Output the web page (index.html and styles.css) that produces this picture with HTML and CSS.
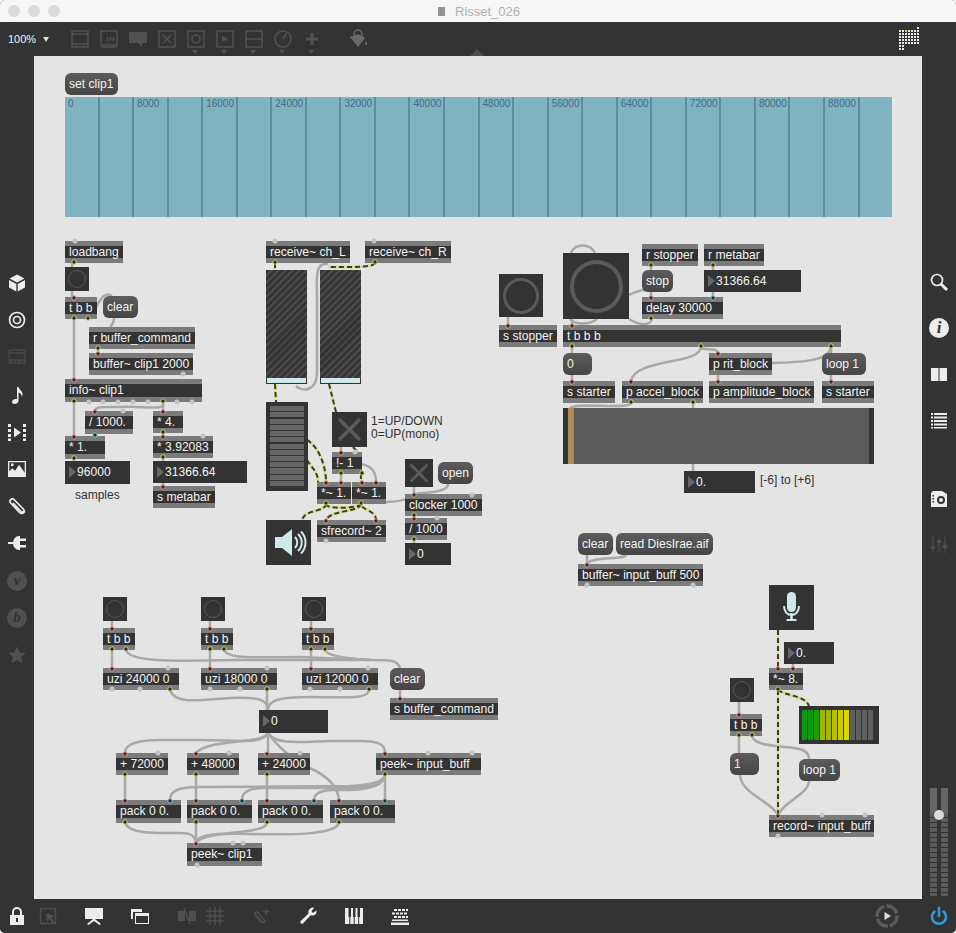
FILE: index.html
```html
<!DOCTYPE html>
<html lang="en">
<head>
<meta charset="utf-8">
<title>Risset_026</title>
<link rel="stylesheet" href="styles.css">
</head>
<body>
<div class="window">
  <header class="titlebar">
    <div class="lights"><i></i><i></i><i></i></div>
    <div class="title"><b class="docicon"></b><span>Risset_026</span></div>
  </header>

  <div class="toolbar">
    <div class="zoomctl">100%<i class="caret"></i></div>
    <svg class="ti" viewBox="0 0 20 20"><path d="M2 2h16v16H2zM2 5h16M2 15h16"/></svg>
    <svg class="ti" viewBox="0 0 20 20"><path d="M2 2h16v14H2zM2 18h16M8 12l1-4M11 12l1-4M14 12l1-4"/></svg>
    <svg class="ti fill" viewBox="0 0 20 20"><path d="M1 3h18v11h-5v4l-4-4H1z"/></svg>
    <svg class="ti" viewBox="0 0 20 20"><path d="M2 2h16v16H2zM6 6l8 8M14 6l-8 8"/></svg>
    <span class="tm"><svg class="ti" viewBox="0 0 20 20"><path d="M2 2h16v16H2z"/><circle cx="10" cy="10" r="4"/></svg></span>
    <span class="tm"><svg class="ti" viewBox="0 0 20 20"><path d="M2 2h16v16H2z"/><path class="solid" d="M7 7l6 3-6 3z"/></svg></span>
    <span class="tm"><svg class="ti" viewBox="0 0 20 20"><path d="M2 2h16v16H2zM2 10h16"/></svg></span>
    <span class="tm"><svg class="ti" viewBox="0 0 20 20"><circle cx="10" cy="10" r="8" /><path d="M10 10l3-5"/></svg></span>
    <span class="tm"><svg class="ti thick" viewBox="0 0 20 20"><path d="M10 4v12M4 10h12"/></svg></span>
    <svg class="ti bucket" viewBox="0 0 20 20"><path d="M6 8V5a4 4 0 0 1 8 0v3"/><path class="solid" d="M2 8l8-3 7 4-7 9z"/><path class="solid" d="M18 12c1 2 1.500 3 .8 3.800-.8.700-2 .2-2-.8s.5-2 1.200-3z"/></svg>
    <div class="notch"></div>
    <svg class="gridicon" viewBox="0 0 21 24">
      <defs><pattern id="dots" width="3" height="3" patternUnits="userSpaceOnUse"><rect width="2" height="2" fill="#e8e8e8"/></pattern></defs>
      <rect x="0" y="3" width="21" height="15" fill="url(#dots)"/>
      <rect x="18" y="0" width="3" height="3" fill="url(#dots)"/>
      <rect x="0" y="18" width="6" height="6" fill="url(#dots)"/>
      <rect x="6" y="3" width="2" height="2" fill="#d8d83a"/>
    </svg>
  </div>

  <div class="middle">
    <nav class="rail left">
      <svg class="ri" viewBox="0 0 20 20"><path class="solid" d="M10 1.500l7.500 4-7.500 4-7.500-4zM2 7l7.300 4v7.500L2 14.500zM18 7l-7.300 4v7.500l7.300-4z"/></svg>
      <svg class="ri line2" viewBox="0 0 20 20"><circle cx="10" cy="10" r="7.500"/><circle cx="10" cy="10" r="3.500"/></svg>
      <svg class="ri dim" viewBox="0 0 20 20"><path d="M2 3h16v13H2zM2 6h16M2 13h16M4 16v-3M8 16v-3M12 16v-3"/></svg>
      <svg class="ri" viewBox="0 0 20 20"><path class="solid" d="M10 2h1.500c.5 3 4 3.500 4 7 0 1-.3 2-.8 3 .2-2.500-1.500-4-3.200-4.500V15.500c0 2-2 3.500-4 3.500-1.500 0-2.500-.8-2.500-2 0-1.800 2-3 3.600-3 .5 0 1 0 1.400.3z"/></svg>
      <svg class="ri" viewBox="0 0 20 20"><path class="solid" d="M1 2h3v3H1zM1 7h3v3H1zM1 12h3v3H1zM1 16.500h3v2.500H1zM16 2h3v3h-3zM16 7h3v3h-3zM16 12h3v3h-3zM16 16.500h3v2.500h-3zM7 5.500l7 5-7 5z"/></svg>
      <svg class="ri" viewBox="0 0 20 20"><path class="solid" fill-rule="evenodd" d="M1 2h18v16H1zM2.300 3.300v9l3-3 2.700 2.500 4-6 5.700 8V3.300zM4 4.500h2.500V7H4z"/></svg>
      <svg class="ri line2" viewBox="0 0 20 20"><path d="M6 7l8 8.500c1.500 1.800 4-.5 2.500-2.300L7 3.500C5 1.500 1.500 4.500 3.500 6.800l9 9.700c2 2 5.300.5 5-2"/></svg>
      <svg class="ri" viewBox="0 0 20 20"><path class="solid" d="M6 10a6 7 0 0 1 6-7h1v14h-1a6 7 0 0 1-6-7zM13 5.500h6V8h-6zM13 12h6v2.500h-6zM1 9h6v2H1z"/></svg>
      <div class="badge">v</div>
      <div class="badge">b</div>
      <svg class="ri dim" viewBox="0 0 20 20"><path class="solid" d="M10 1.500l2.500 5.800 6.300.6-4.800 4.100 1.500 6.200-5.500-3.300-5.500 3.300 1.500-6.200L1.200 7.900l6.300-.6z"/></svg>
    </nav>

    <main class="canvas">
      <svg class="wires" viewBox="34 56 888 843">
        <defs>
          <g id="sigs">
            <path d="M275 263V270"/>
            <path d="M375 263C374 268 345 267 328 267"/>
            <path d="M275 384L276 402"/>
            <path d="M329 384L336 412"/>
            <path d="M307 440C318 446 326 465 326 482"/>
            <path d="M307 460C312 468 318 472 318 482"/>
            <path d="M353 447L361 456"/>
            <path d="M361 474V482"/>
            <path d="M326 504C326 512 305 509 302 520"/>
            <path d="M326 504C326 510 361 508 361 504C361 510 376 510 376 520"/>
            <path d="M361 504C360 512 330 510 326 520"/>
            <path d="M778 630V668"/>
            <path d="M778 690C785 696 805 695 809 706"/>
            <path d="M778 690V815"/>
          </g>
        </defs>
        <g class="wire">
          <path d="M72 263V267M72 291V297M74 319V379"/>
          <path d="M88 319C96 315 100 288 112 296"/>
          <path d="M114 318C114 322 112 325 110 327"/>
          <path d="M98 349V353"/>
          <path d="M163 402V405C163 410 140 406 120 407C105 407 95 406 95 411"/>
          <path d="M163 402V411M95 434V436M163 433V436M74 402V436M74 459V461M163 458V461M163 483V486"/>
          <path d="M328 264C314 262 317 280 317 300V372C317 392 302 392 296 386"/>
          <path d="M341 447V452M341 474V482"/>
          <path d="M361 464C372 466 376 472 376 482"/>
          <path d="M386 502C395 502 405 500 411 497"/>
          <path d="M414 487V494M414 516V518M414 540V543"/>
          <path d="M448 484C448 492 430 492 415 494"/>
          <path d="M508 317V325"/>
          <path d="M571 253C575 243 590 243 595 253"/>
          <path d="M570 319C575 325 590 325 597 319"/>
          <path d="M629 295C635 292 640 290 645 290"/>
          <path d="M629 319C640 326 650 326 652 319"/>
          <path d="M651 266V297M713 266V270M713 292V297M572 319V325M572 347V381"/>
          <path d="M701 347C700 365 635 358 631 381"/>
          <path d="M701 347C701 351 718 347 718 353M718 375V381"/>
          <path d="M772 363C800 362 828 362 831 347"/>
          <path d="M831 347V381"/>
          <path d="M631 403C630 410 575 402 570 408"/>
          <path d="M693 403V471"/>
          <path d="M112 621V668M210 621V668M311 621V668"/>
          <path d="M126 650C130 665 200 660 240 660L370 660C390 660 398 660 400 668"/>
          <path d="M224 650C228 660 260 657 300 657L370 660"/>
          <path d="M325 649C325 656 345 658 370 660"/>
          <path d="M400 690V698"/>
          <path d="M170 690C175 705 200 700 230 698C260 697 268 700 268 710"/>
          <path d="M267 690V710"/>
          <path d="M369 690C368 700 345 697 310 697C280 697 268 700 268 710"/>
          <path d="M268 733C262 745 240 740 200 740L160 740C135 740 125 745 125 753"/>
          <path d="M268 733C262 745 210 738 196 753"/>
          <path d="M268 733V753"/>
          <path d="M268 733C275 745 300 742 330 741L360 741C380 741 385 745 385 753"/>
          <path d="M268 733C280 750 300 765 310 768C325 775 338 785 339 800"/>
          <path d="M125 775V800M196 775V800M267 775V800M385 775V800"/>
          <path d="M385 775C384 782 372 785 350 786L200 787C180 787 170 790 170 800"/>
          <path d="M385 775C384 783 372 787 350 788L265 788C250 788 242 792 242 800"/>
          <path d="M385 775C384 785 372 789 350 790L335 790C322 790 314 793 314 800"/>
          <path d="M125 823C130 835 160 833 180 833C190 833 195 835 196 843"/>
          <path d="M196 823V843"/>
          <path d="M267 823C265 835 205 830 196 843"/>
          <path d="M339 823C335 835 290 835 250 834C210 833 197 835 196 843"/>
          <path d="M587 555V564"/>
          <path d="M626 555C625 560 590 556 587 564"/>
          <path d="M793 664V668M739 702V714M739 736V753"/>
          <path d="M752 736C755 745 770 745 785 747C800 748 809 750 809 759"/>
          <path d="M740 775C742 795 770 800 778 815"/>
          <path d="M809 781C808 795 785 800 778 815"/>
        </g>
        <use href="#sigs" class="sig-a"/>
        <use href="#sigs" class="sig-b"/>
      </svg>

      <div class="msg n-setclip">set clip1</div>
      <div class="wave">
        <div class="cell">0</div><div class="cell"></div>
        <div class="cell">8000</div><div class="cell"></div>
        <div class="cell">16000</div><div class="cell"></div>
        <div class="cell">24000</div><div class="cell"></div>
        <div class="cell">32000</div><div class="cell"></div>
        <div class="cell">40000</div><div class="cell"></div>
        <div class="cell">48000</div><div class="cell"></div>
        <div class="cell">56000</div><div class="cell"></div>
        <div class="cell">64000</div><div class="cell"></div>
        <div class="cell">72000</div><div class="cell"></div>
        <div class="cell">80000</div><div class="cell"></div>
        <div class="cell">88000</div><div class="cell"></div>
      </div>

      <div class="obj n-loadbang">loadbang</div>
      <div class="btn n-btn1"></div>
      <div class="obj n-tbb1">t b b</div>
      <div class="msg n-clear1">clear</div>
      <div class="obj n-rbuf">r buffer_command</div>
      <div class="obj n-bufclip">buffer~ clip1 2000</div>
      <div class="obj tall n-info">info~ clip1</div>
      <div class="obj tall n-div1">/ 1000.</div>
      <div class="obj n-mul4">* 4.</div>
      <div class="obj tall n-mul1">* 1.</div>
      <div class="obj n-mul39">* 3.92083</div>
      <div class="num tall n-num96">96000</div>
      <div class="num n-num31a">31366.64</div>
      <div class="note n-samples">samples</div>
      <div class="obj n-smeta">s metabar</div>

      <div class="obj n-recvl">receive~ ch_L</div>
      <div class="obj n-recvr">receive~ ch_R</div>
      <div class="gain n-gainl"><div class="hatch"></div><div class="gainfoot"></div></div>
      <div class="gain n-gainr"><div class="hatch"></div><div class="gainfoot"></div></div>
      <div class="meter n-meter"><div class="rows"></div></div>
      <div class="tog n-tog1"><svg viewBox="0 0 20 20"><path d="M4 4l12 12M16 4L4 16"/></svg></div>
      <div class="note n-updown">1=UP/DOWN<br>0=UP(mono)</div>
      <div class="obj n-minus">!- 1</div>
      <div class="obj n-muls1">*~ 1.</div>
      <div class="obj n-muls2">*~ 1.</div>
      <div class="tile n-ezdac">
        <svg viewBox="0 0 45 45"><path class="light" d="M9 17h7l10-8v27l-10-8H9z"/><path class="lightline" d="M29 17c3 3 3 8 0 11M32 14c5 5 5 12 0 17M35 11.500c6 6 6 16 0 22"/></svg>
      </div>
      <div class="obj n-sfrec">sfrecord~ 2</div>
      <div class="tog n-tog2"><svg viewBox="0 0 20 20"><path d="M4 4l12 12M16 4L4 16"/></svg></div>
      <div class="msg n-open">open</div>
      <div class="obj n-clocker">clocker 1000</div>
      <div class="obj n-div2">/ 1000</div>
      <div class="num n-num0a">0</div>

      <div class="btn mid n-btnstop"></div>
      <div class="obj n-sstop">s stopper</div>
      <div class="btn big n-bigbtn"></div>
      <div class="obj n-rstop">r stopper</div>
      <div class="obj n-rmeta">r metabar</div>
      <div class="msg n-stop">stop</div>
      <div class="num n-num31b">31366.64</div>
      <div class="obj n-delay">delay 30000</div>
      <div class="obj n-tbbb">t b b b</div>
      <div class="msg n-msg0">0</div>
      <div class="obj n-prit">p rit_block</div>
      <div class="msg n-loop1">loop 1</div>
      <div class="obj n-sstart1">s starter</div>
      <div class="obj n-paccel">p accel_block</div>
      <div class="obj n-pamp">p amplitude_block</div>
      <div class="obj n-sstart2">s starter</div>
      <div class="slider"><i class="knob"></i></div>
      <div class="num n-num0b">0.</div>
      <div class="note n-range">[-6] to [+6]</div>

      <div class="btn n-b1"></div><div class="btn n-b2"></div><div class="btn n-b3"></div>
      <div class="obj n-t1">t b b</div><div class="obj n-t2">t b b</div><div class="obj n-t3">t b b</div>
      <div class="obj n-uzi1">uzi 24000 0</div>
      <div class="obj n-uzi2">uzi 18000 0</div>
      <div class="obj n-uzi3">uzi 12000 0</div>
      <div class="msg n-clear2">clear</div>
      <div class="obj n-sbuf">s buffer_command</div>
      <div class="num tall n-num0c">0</div>
      <div class="obj n-p72">+ 72000</div>
      <div class="obj n-p48">+ 48000</div>
      <div class="obj n-p24">+ 24000</div>
      <div class="obj n-peekin">peek~ input_buff</div>
      <div class="obj tall n-pack1">pack 0 0.</div>
      <div class="obj tall n-pack2">pack 0 0.</div>
      <div class="obj tall n-pack3">pack 0 0.</div>
      <div class="obj tall n-pack4">pack 0 0.</div>
      <div class="obj tall n-peekclip">peek~ clip1</div>

      <div class="msg n-clear3">clear</div>
      <div class="msg n-read">read DiesIrae.aif</div>
      <div class="obj n-bufin">buffer~ input_buff 500</div>
      <div class="tile n-mic">
        <svg viewBox="0 0 45 45"><rect class="light" x="18" y="7" width="9" height="20" rx="4.500"/><path class="lightline" d="M15 21c0 12 15 12 15 0"/><path class="light" d="M21.200 28h2.600v6h3.700v2h-10v-2h3.700z"/></svg>
      </div>
      <div class="num n-num0d">0.</div>
      <div class="obj n-mul8">*~ 8.</div>
      <div class="btn n-b5"></div>
      <div class="obj n-t5">t b b</div>
      <div class="levels"><i></i><i></i><i></i><i></i><i></i><i></i><i></i><i></i><i></i><i></i><i></i><i></i></div>
      <div class="msg n-msg1">1</div>
      <div class="msg n-loop2">loop 1</div>
      <div class="obj n-record">record~ input_buff</div>

      <svg class="ports" viewBox="34 56 888 843">
        <g class="idle">
          <circle cx="75" cy="241" r="2.500"/><circle cx="183" cy="374" r="2.500"/><circle cx="89" cy="402" r="2.500"/><circle cx="103" cy="402" r="2.500"/><circle cx="118" cy="402" r="2.500"/><circle cx="133" cy="402" r="2.500"/><circle cx="148" cy="402" r="2.500"/><circle cx="177" cy="402" r="2.500"/><circle cx="192" cy="402" r="2.500"/><circle cx="123" cy="411" r="2.500"/><circle cx="203" cy="436" r="2.500"/>
          <circle cx="275" cy="241" r="2.500"/><circle cx="374" cy="241" r="2.500"/><circle cx="355" cy="452" r="2.500"/><circle cx="326" cy="541" r="2.500"/><circle cx="472" cy="495" r="2.500"/><circle cx="437" cy="518" r="2.500"/>
          <circle cx="168" cy="668" r="2.500"/><circle cx="267" cy="668" r="2.500"/><circle cx="368" cy="668" r="2.500"/><circle cx="112" cy="689" r="2.500"/><circle cx="140" cy="689" r="2.500"/><circle cx="210" cy="689" r="2.500"/><circle cx="240" cy="689" r="2.500"/><circle cx="310" cy="689" r="2.500"/><circle cx="340" cy="689" r="2.500"/>
          <circle cx="158" cy="753" r="2.500"/><circle cx="229" cy="753" r="2.500"/><circle cx="300" cy="753" r="2.500"/><circle cx="428" cy="753" r="2.500"/><circle cx="472" cy="753" r="2.500"/><circle cx="197" cy="865" r="2.500"/><circle cx="233" cy="843" r="2.500"/><circle cx="243" cy="843" r="2.500"/>
          <circle cx="587" cy="585" r="2.500"/><circle cx="693" cy="585" r="2.500"/><circle cx="822" cy="815" r="2.500"/><circle cx="865" cy="815" r="2.500"/><circle cx="778" cy="836" r="2.500"/>
        </g>
        <g class="in">
          <circle cx="74" cy="298" r="2.200"/><circle cx="98" cy="354" r="2.200"/><circle cx="74" cy="380" r="2.200"/><circle cx="95" cy="412" r="2.200"/><circle cx="74" cy="437" r="2.200"/><circle cx="163" cy="412" r="2.200"/><circle cx="163" cy="437" r="2.200"/><circle cx="163" cy="487" r="2.200"/>
          <circle cx="326" cy="483" r="2.200"/><circle cx="341" cy="483" r="2.200"/><circle cx="362" cy="483" r="2.200"/><circle cx="376" cy="483" r="2.200"/><circle cx="341" cy="453" r="2.200"/><circle cx="414" cy="495" r="2.200"/><circle cx="414" cy="519" r="2.200"/><circle cx="326" cy="521" r="2.200"/><circle cx="376" cy="521" r="2.200"/>
          <circle cx="508" cy="326" r="2.200"/><circle cx="572" cy="326" r="2.200"/><circle cx="651" cy="298" r="2.200"/><circle cx="718" cy="354" r="2.200"/><circle cx="572" cy="382" r="2.200"/><circle cx="631" cy="382" r="2.200"/><circle cx="718" cy="382" r="2.200"/><circle cx="831" cy="382" r="2.200"/>
          <circle cx="112" cy="629" r="2.200"/><circle cx="210" cy="629" r="2.200"/><circle cx="311" cy="629" r="2.200"/><circle cx="112" cy="669" r="2.200"/><circle cx="210" cy="669" r="2.200"/><circle cx="311" cy="669" r="2.200"/><circle cx="400" cy="699" r="2.200"/><circle cx="125" cy="754" r="2.200"/><circle cx="196" cy="754" r="2.200"/><circle cx="267" cy="754" r="2.200"/><circle cx="385" cy="754" r="2.200"/><circle cx="125" cy="801" r="2.200"/><circle cx="196" cy="801" r="2.200"/><circle cx="267" cy="801" r="2.200"/><circle cx="339" cy="801" r="2.200"/><circle cx="196" cy="844" r="2.200"/>
          <circle cx="587" cy="565" r="2.200"/><circle cx="778" cy="669" r="2.200"/><circle cx="793" cy="669" r="2.200"/><circle cx="739" cy="715" r="2.200"/><circle cx="778" cy="816" r="2.200"/>
        </g>
        <g class="cold">
          <circle cx="95" cy="435" r="2.200"/><circle cx="713" cy="298" r="2.200"/><circle cx="170" cy="801" r="2.200"/><circle cx="242" cy="801" r="2.200"/><circle cx="314" cy="801" r="2.200"/><circle cx="385" cy="801" r="2.200"/>
        </g>
        <g class="out">
          <circle cx="74" cy="262" r="2.200"/><circle cx="74" cy="318" r="2.200"/><circle cx="88" cy="318" r="2.200"/><circle cx="98" cy="348" r="2.200"/><circle cx="74" cy="401" r="2.200"/><circle cx="163" cy="401" r="2.200"/><circle cx="163" cy="432" r="2.200"/><circle cx="163" cy="457" r="2.200"/><circle cx="74" cy="458" r="2.200"/>
          <circle cx="275" cy="262" r="2.200"/><circle cx="375" cy="262" r="2.200"/><circle cx="341" cy="473" r="2.200"/><circle cx="362" cy="473" r="2.200"/><circle cx="326" cy="503" r="2.200"/><circle cx="361" cy="503" r="2.200"/><circle cx="414" cy="515" r="2.200"/><circle cx="414" cy="539" r="2.200"/>
          <circle cx="651" cy="265" r="2.200"/><circle cx="713" cy="265" r="2.200"/><circle cx="651" cy="318" r="2.200"/><circle cx="572" cy="346" r="2.200"/><circle cx="701" cy="346" r="2.200"/><circle cx="831" cy="346" r="2.200"/><circle cx="631" cy="402" r="2.200"/><circle cx="693" cy="402" r="2.200"/>
          <circle cx="112" cy="649" r="2.200"/><circle cx="126" cy="649" r="2.200"/><circle cx="210" cy="649" r="2.200"/><circle cx="224" cy="649" r="2.200"/><circle cx="311" cy="649" r="2.200"/><circle cx="325" cy="649" r="2.200"/><circle cx="170" cy="689" r="2.200"/><circle cx="267" cy="689" r="2.200"/><circle cx="369" cy="689" r="2.200"/><circle cx="125" cy="774" r="2.200"/><circle cx="196" cy="774" r="2.200"/><circle cx="267" cy="774" r="2.200"/><circle cx="385" cy="774" r="2.200"/><circle cx="125" cy="822" r="2.200"/><circle cx="196" cy="822" r="2.200"/><circle cx="267" cy="822" r="2.200"/><circle cx="339" cy="822" r="2.200"/>
          <circle cx="778" cy="689" r="2.200"/><circle cx="739" cy="735" r="2.200"/><circle cx="752" cy="735" r="2.200"/>
        </g>
      </svg>
    </main>

    <aside class="rail right">
      <svg class="ri line2" viewBox="0 0 20 20"><circle cx="8" cy="8" r="5.500"/><path class="thickline" d="M12 12l6 6"/></svg>
      <div class="infoicon">i</div>
      <svg class="ri" viewBox="0 0 20 20"><path class="solid" d="M2 4h7.500v13H2zM10.500 4H18v13h-7.500z"/></svg>
      <svg class="ri" viewBox="0 0 20 20"><path class="solid" d="M2 3h2v2H2zM5 3h13v2H5zM2 6.500h2v2H2zM5 6.500h13v2H5zM2 10h2v2H2zM5 10h13v2H5zM2 13.500h2v2H2zM5 13.500h13v2H5zM2 17h2v1.500H2zM5 17h13v1.500H5z"/></svg>
      <svg class="ri cam" viewBox="0 0 20 20"><path class="solid" fill-rule="evenodd" d="M4 2h9l5 3v13H2V4zM12 7a4 4 0 1 0 0 8 4 4 0 0 0 0-8zM12 9a2 2 0 1 1 0 4 2 2 0 0 1 0-4zM3.500 6v1.500H5V6zM3.500 9v1.500H5V9zM3.500 12v1.500H5V12z"/></svg>
      <svg class="ri dim" viewBox="0 0 20 20"><path d="M4 2v16M10 2v16M16 2v16"/><path class="solid" d="M2 11h4v3H2zM8 5h4v3H8zM14 10h4v3h-4z"/></svg>
      <div class="volume">
        <div class="vcol"><div class="vtop"></div><div class="vseg"></div></div>
        <div class="vcol"><div class="vtop"></div><div class="vseg"></div></div>
        <i class="vknob"></i>
      </div>
    </aside>
  </div>

  <footer class="bottombar">
    <svg class="bi" viewBox="0 0 20 20"><path class="solid" fill-rule="evenodd" d="M3 9h2V6a5 5 0 0 1 10 0v3h2v10H3zM7 9h6V6a3 3 0 0 0-6 0zM9 12v4h2v-4z"/></svg>
    <svg class="bi dim gap1" viewBox="0 0 20 20"><path d="M2.500 2.500h15v15h-15z"/><path class="solid" d="M8 7l9 3-4 1.500 4 5-2 1.500-4-5-2 3z"/></svg>
    <svg class="bi gap2" viewBox="0 0 20 20"><path class="solid" d="M1 2h18v11H11l6 5-1.500 1L10 15l-5.500 4L3 18l6-5H1z"/></svg>
    <svg class="bi gap2" viewBox="0 0 20 20"><path class="solid" fill-rule="evenodd" d="M1 3h11v3H1zM1 6h2v7H1zM5 7h14v11H5zM6 10v7h12v-7z"/></svg>
    <svg class="bi dim gap3" viewBox="0 0 20 20"><path class="solid" d="M1 5h7v10H1zM12 5h7v10h-7z"/><path d="M7 2l6 16"/></svg>
    <svg class="bi dim gap4" viewBox="0 0 20 20"><path d="M5 1v18M10 1v18M15 1v18M1 5h18M1 10h18M1 15h18"/></svg>
    <svg class="bi dim gap3" viewBox="0 0 20 20"><path class="wd" d="M4 9l6 7c1.500 1.500 3.500-.2 2.200-2L6 6.500C5 5 2 7 3.200 9l6 7.500"/><path d="M14 2v7M10.500 5.500h7"/></svg>
    <svg class="bi gap2" viewBox="0 0 20 20"><path class="solid" d="M18.500 4.500c.5 2.500-1 5-4 5-.7 0-1.200 0-1.800-.3L5 17.500c-1 1.200-3.500-1-2.500-2.300l8-7.800c-.5-2.500 1-5.500 4-5.900.7 0 1.200 0 1.700.3L13.500 5l1.300 2 3.700-2.500z"/></svg>
    <svg class="bi gap2" viewBox="0 0 20 20"><path class="solid" d="M1 2h18v16H1z"/><path class="key" d="M4.500 2h2.500v9H6.300v7h-1v-7h-.8zM9 2h2.500v9h-.8v7h-1v-7H9zM13.500 2H16v9h-.8v7h-1v-7h-.7z"/></svg>
    <svg class="bi gap2" viewBox="0 0 20 20"><path class="solid" d="M4 3h3v2H4zM8 3h3v2H8zM12 3h3v2h-3zM16 3h2v2h-2zM2 6.500h3v2H2zM6 6.500h3v2H6zM10 6.500h3v2h-3zM14 6.500h3v2h-3zM4 10h3v2H4zM8 10h3v2H8zM12 10h3v2h-3zM16 10h2v2h-2zM2 13.500h16v1.500H2zM1 16.500h18V19H1z"/></svg>
    <svg class="playicon" viewBox="0 0 24 24"><circle class="ring" cx="12" cy="12" r="10"/><path class="solid" d="M9.500 8l6.500 4-6.500 4z"/></svg>
    <svg class="powericon" viewBox="0 0 20 20"><path d="M10 2v8M5.500 5.500a7 7 0 1 0 9 0"/></svg>
  </footer>
</div>
</body>
</html>
```

FILE: styles.css
```css
* { box-sizing: border-box; }
html, body { margin: 0; padding: 0; background: #fff; }
body { font-family: "Liberation Sans", Arial, sans-serif; }

.window { width: 956px; height: 933px; display: flex; flex-direction: column; overflow: hidden; border-radius: 5px; background: #333; }

/* title bar */
.titlebar { height: 22px; flex: none; background: #f6f6f6; display: flex; align-items: center; position: relative; }
.lights { display: flex; gap: 8px; padding-left: 8px; }
.lights i { width: 12px; height: 12px; border-radius: 50%; background: #dcdcdc; }
.title { position: absolute; left: 438px; top: 3px; display: flex; align-items: center; gap: 10px; color: #b0b0b0; font-size: 13px; line-height: 17px; }
.docicon { width: 7px; height: 9px; background: #939393; }

/* toolbar */
.toolbar { height: 34px; flex: none; background: #333; display: flex; align-items: center; position: relative; padding-right: 36px; }
.zoomctl { width: 70px; padding-left: 8px; color: #f2f2f2; font-size: 11px; display: flex; align-items: center; gap: 7px; }
.caret { width: 0; height: 0; border-left: 3px solid transparent; border-right: 3px solid transparent; border-top: 5px solid #ddd; }
.ti { width: 20px; height: 20px; margin-right: 9px; flex: none; fill: none; stroke: #525252; stroke-width: 1.500; }
.ti .solid, .ti.fill { fill: #525252; stroke: none; }
.ti.thick { stroke-width: 3; }
.ti.bucket { margin-left: 17px; stroke: #666; }
.ti.bucket .solid { fill: #6a6a6a; }
.tm { position: relative; display: flex; }
.tm::after { content: ""; position: absolute; left: 6px; top: 21px; width: 0; height: 0; border-left: 3px solid transparent; border-right: 3px solid transparent; border-top: 4px solid #525252; }
.notch { position: absolute; left: 470px; top: 27px; width: 0; height: 0; border-left: 7px solid transparent; border-right: 7px solid transparent; border-bottom: 7px solid #4c4c4c; }
.gridicon { width: 21px; height: 24px; margin-left: auto; margin-right: 0; flex: none; }

/* middle */
.middle { flex: 1; display: flex; min-height: 0; }
.rail { width: 34px; flex: none; background: #333; display: flex; flex-direction: column; align-items: center; }
.rail.left { padding: 217px 0 0; gap: 17.200px; }
.rail.right { padding: 216px 0 3px; gap: 26px; position: relative; }
.ri { width: 20px; height: 20px; flex: none; fill: none; stroke: #ececec; stroke-width: 1; }
.ri .solid { fill: #ececec; stroke: none; }
.ri.line2 { stroke-width: 1.700; }
.ri .thickline { stroke-width: 3; }
.ri.dim { stroke: #505050; }
.ri.dim .solid { fill: #505050; }
.ri.cam { margin-top: 33px; }
.badge { width: 20px; height: 20px; flex: none; border-radius: 50%; background: #505050; color: #333; font: italic bold 15px/18px "Liberation Serif", serif; text-align: center; }
.infoicon { width: 20px; height: 20px; flex: none; border-radius: 50%; background: #ececec; color: #333; font: italic bold 17px/20px "Liberation Serif", serif; text-align: center; }

.volume { margin-top: auto; width: 18px; height: 108px; display: flex; gap: 4px; position: relative; }
.vcol { width: 7px; display: flex; flex-direction: column; }
.vtop { height: 25px; background: #666; }
.vseg { flex: 1; background: repeating-linear-gradient(to bottom, #5c5c5c 0 4px, #333 4px 5px); }
.vknob { position: absolute; left: 4px; top: 22px; width: 10px; height: 10px; border-radius: 50%; background: #dcdcdc; }

/* bottom bar */
.bottombar { height: 34px; flex: none; background: #333; display: flex; align-items: center; padding-left: 7px; position: relative; }
.bi { width: 20px; height: 20px; flex: none; fill: none; stroke: #ececec; stroke-width: 1.500; }
.bi .solid { fill: #ececec; stroke: none; }
.bi .key { fill: #333; stroke: none; }
.bi.dim { stroke: #4e4e4e; }
.bi.dim .solid { fill: #4e4e4e; stroke: none; }
.gap1 { margin-left: 11px; }
.gap2 { margin-left: 26px; }
.gap3 { margin-left: 27px; }
.gap4 { margin-left: 8px; }
.playicon { width: 24px; height: 24px; flex: none; margin-left: auto; margin-right: 30px; fill: none; }
.playicon .ring { stroke: #5a5a5a; stroke-width: 3.500; stroke-dasharray: 13.700 2; stroke-dashoffset: 1; }
.playicon .solid { fill: #ddd; }
.powericon { width: 20px; height: 20px; flex: none; margin-right: 7px; fill: none; stroke: #2f9bdc; stroke-width: 2.500; stroke-linecap: round; }

/* canvas */
.canvas { flex: 1; position: relative; background: #e4e4e4; overflow: hidden; }
.wires, .ports { position: absolute; left: 0; top: 0; width: 888px; height: 843px; }
.ports { z-index: 2; }
.wire { fill: none; stroke: #a8a8a8; stroke-width: 2.500; }
.sig-a { fill: none; stroke: #d9de8a; stroke-width: 3; }
.sig-b { fill: none; stroke: #3c3c32; stroke-width: 2; stroke-dasharray: 5 3; }
.idle circle { fill: #c4c4c4; }
.in circle { fill: #3a2b2b; stroke: #dd9a8f; stroke-width: 1; }
.cold circle { fill: #22343a; stroke: #7fc8d2; stroke-width: 1; }
.out circle { fill: #2a2a22; stroke: #cdd26c; stroke-width: 1; }

.obj, .num, .msg, .btn, .tog, .tile, .gain, .meter, .slider, .levels, .note, .wave { position: absolute; }
.obj { height: 22px; background: #333; border-top: 5px solid #7b7b7b; border-bottom: 5px solid #7b7b7b; color: #f4f4f4; font-size: 12.100px; line-height: 12px; padding: 0 4px; white-space: nowrap; }
.obj.tall { height: 23px; line-height: 13px; }
.num { height: 22px; background: #333; color: #f4f4f4; font-size: 12.100px; line-height: 22px; padding-left: 12px; white-space: nowrap; }
.num.tall { height: 23px; line-height: 23px; }
.num::before { content: ""; position: absolute; left: 4px; top: 5px; width: 0; height: 0; border-top: 6px solid transparent; border-bottom: 6px solid transparent; border-left: 7px solid #666; }
.msg { height: 22px; border-radius: 6px; background: linear-gradient(#5c5c5c, #454545); color: #f4f4f4; font-size: 12.100px; line-height: 22px; padding: 0 4px; white-space: nowrap; }
.note { color: #333; font-size: 12px; line-height: 13px; white-space: nowrap; }
.btn { width: 24px; height: 24px; background: #333; display: flex; align-items: center; justify-content: center; }
.btn::before { content: ""; width: 16px; height: 16px; border-radius: 50%; border: 1.500px solid #5a5a5a; }
.btn.mid { width: 44px; height: 43px; }
.btn.mid::before { width: 30px; height: 30px; border-width: 3px; }
.btn.big { width: 66px; height: 66px; }
.btn.big::before { width: 45px; height: 45px; border-width: 4px; }
.tog { background: #333; }
.tog svg { display: block; width: 100%; height: 100%; fill: none; stroke: #5a5a5a; stroke-width: 2; }
.tile { width: 45px; height: 45px; background: #333; }
.tile svg { display: block; width: 45px; height: 45px; }
.light { fill: #cfe8e8; }
.lightline { fill: none; stroke: #cfe8e8; stroke-width: 2; }

.gain { width: 41px; height: 114px; background: #333; display: flex; flex-direction: column; }
.hatch { flex: 1; background: repeating-linear-gradient(135deg, #353535 0 3px, #4a4a4a 3px 5px); }
.gainfoot { height: 5px; background: #cfe8e8; border-left: 1px solid #333; border-right: 1px solid #333; border-bottom: 1px solid #333; box-sizing: content-box; }
.meter { left: 232px; top: 346px; width: 42px; height: 89px; background: #333; padding: 4px; }
.rows { height: 81px; background: repeating-linear-gradient(to bottom, #666 0 5px, #333 5px 6.250px); }

.slider { left: 529px; top: 352px; width: 311px; height: 56px; background: #333; padding: 0 5px; }
.slider::before { content: ""; display: block; height: 100%; background: #5a5a5a; }
.knob { position: absolute; left: 5px; top: 0; width: 6px; height: 100%; background: #b08a55; }

.levels { left: 765px; top: 650px; width: 80px; height: 38px; background: #333; padding: 4px 3px; display: flex; gap: 1px; }
.levels i { width: 5px; background: #606060; }
.levels i:nth-child(1), .levels i:nth-child(2) { background: #0a9a0a; }
.levels i:nth-child(3) { background: #1d9e08; }
.levels i:nth-child(4), .levels i:nth-child(5) { background: #a3b505; }
.levels i:nth-child(6) { background: #b8c005; }
.levels i:nth-child(7) { background: #ccca05; }
.levels i:nth-child(8) { background: #dbd605; }

.wave { left: 31px; top: 41px; width: 827px; height: 120px; background: #7fb3c1; display: flex; }
.cell { flex: 1 1 0; min-width: 0; border-right: 2px solid #5f8aa3; color: #466a88; font-size: 10px; line-height: 13px; padding-left: 3px; white-space: nowrap; }
.cell:last-child { border-right: 0; }

/* patch nodes: places on the free canvas */
.n-setclip { left: 31px; top: 17px; width: 53px; }
.n-loadbang { left: 31px; top: 185px; width: 58px; }
.n-btn1 { left: 31px; top: 211px; }
.n-tbb1 { left: 31px; top: 241px; width: 32px; }
.n-clear1 { left: 69px; top: 240px; width: 35px; }
.n-rbuf { left: 55px; top: 271px; width: 106px; }
.n-bufclip { left: 55px; top: 297px; width: 104px; }
.n-info { left: 31px; top: 323px; width: 137px; }
.n-div1 { left: 51px; top: 355px; width: 48px; }
.n-mul4 { left: 119px; top: 355px; width: 30px; }
.n-mul1 { left: 31px; top: 380px; width: 40px; }
.n-mul39 { left: 119px; top: 380px; width: 60px; }
.n-num96 { left: 31px; top: 405px; width: 65px; }
.n-num31a { left: 119px; top: 405px; width: 94px; }
.n-samples { left: 41px; top: 433px; }
.n-smeta { left: 119px; top: 430px; width: 62px; }

.n-recvl { left: 232px; top: 185px; width: 84px; }
.n-recvr { left: 331px; top: 185px; width: 86px; }
.n-gainl { left: 232px; top: 214px; }
.n-gainr { left: 286px; top: 214px; }
.n-tog1 { left: 298px; top: 356px; width: 35px; height: 35px; }
.n-updown { left: 337px; top: 359px; }
.n-minus { left: 298px; top: 396px; width: 30px; }
.n-muls1 { left: 283px; top: 426px; width: 34px; }
.n-muls2 { left: 318px; top: 426px; width: 34px; }
.n-ezdac { left: 232px; top: 464px; }
.n-sfrec { left: 283px; top: 464px; width: 69px; }
.n-tog2 { left: 371px; top: 403px; width: 28px; height: 28px; }
.n-open { left: 404px; top: 406px; width: 35px; }
.n-clocker { left: 371px; top: 438px; width: 77px; }
.n-div2 { left: 371px; top: 462px; width: 42px; }
.n-num0a { left: 371px; top: 487px; width: 46px; }

.n-btnstop { left: 465px; top: 218px; }
.n-sstop { left: 465px; top: 269px; width: 58px; }
.n-bigbtn { left: 529px; top: 197px; }
.n-rstop { left: 608px; top: 188px; width: 56px; }
.n-rmeta { left: 670px; top: 188px; width: 60px; }
.n-stop { left: 608px; top: 214px; width: 31px; }
.n-num31b { left: 670px; top: 214px; width: 97px; }
.n-delay { left: 608px; top: 241px; width: 81px; }
.n-tbbb { left: 529px; top: 269px; width: 278px; }
.n-msg0 { left: 529px; top: 297px; width: 29px; }
.n-prit { left: 675px; top: 297px; width: 63px; }
.n-loop1 { left: 788px; top: 297px; width: 44px; }
.n-sstart1 { left: 529px; top: 325px; width: 52px; }
.n-paccel { left: 588px; top: 325px; width: 81px; }
.n-pamp { left: 675px; top: 325px; width: 105px; }
.n-sstart2 { left: 788px; top: 325px; width: 52px; }
.n-num0b { left: 650px; top: 415px; width: 71px; }
.n-range { left: 726px; top: 418px; }

.n-b1 { left: 69px; top: 541px; }
.n-b2 { left: 167px; top: 541px; }
.n-b3 { left: 268px; top: 541px; }
.n-t1 { left: 69px; top: 572px; width: 32px; }
.n-t2 { left: 167px; top: 572px; width: 32px; }
.n-t3 { left: 268px; top: 572px; width: 32px; }
.n-uzi1 { left: 69px; top: 612px; width: 76px; }
.n-uzi2 { left: 167px; top: 612px; width: 76px; }
.n-uzi3 { left: 268px; top: 612px; width: 76px; }
.n-clear2 { left: 356px; top: 612px; width: 35px; }
.n-sbuf { left: 356px; top: 642px; width: 108px; }
.n-num0c { left: 225px; top: 654px; width: 69px; }
.n-p72 { left: 82px; top: 697px; width: 52px; }
.n-p48 { left: 153px; top: 697px; width: 52px; }
.n-p24 { left: 224px; top: 697px; width: 52px; }
.n-peekin { left: 342px; top: 697px; width: 105px; }
.n-pack1 { left: 82px; top: 744px; width: 65px; }
.n-pack2 { left: 153px; top: 744px; width: 65px; }
.n-pack3 { left: 224px; top: 744px; width: 65px; }
.n-pack4 { left: 296px; top: 744px; width: 65px; }
.n-peekclip { left: 153px; top: 787px; width: 75px; }

.n-clear3 { left: 544px; top: 477px; width: 35px; }
.n-read { left: 582px; top: 477px; width: 97px; }
.n-bufin { left: 544px; top: 508px; width: 125px; }
.n-mic { left: 735px; top: 529px; }
.n-num0d { left: 750px; top: 586px; width: 50px; }
.n-mul8 { left: 735px; top: 612px; width: 34px; }
.n-b5 { left: 696px; top: 622px; }
.n-t5 { left: 696px; top: 658px; width: 32px; }
.n-msg1 { left: 696px; top: 697px; width: 29px; }
.n-loop2 { left: 765px; top: 703px; width: 41px; }
.n-record { left: 735px; top: 759px; width: 105px; }
```
